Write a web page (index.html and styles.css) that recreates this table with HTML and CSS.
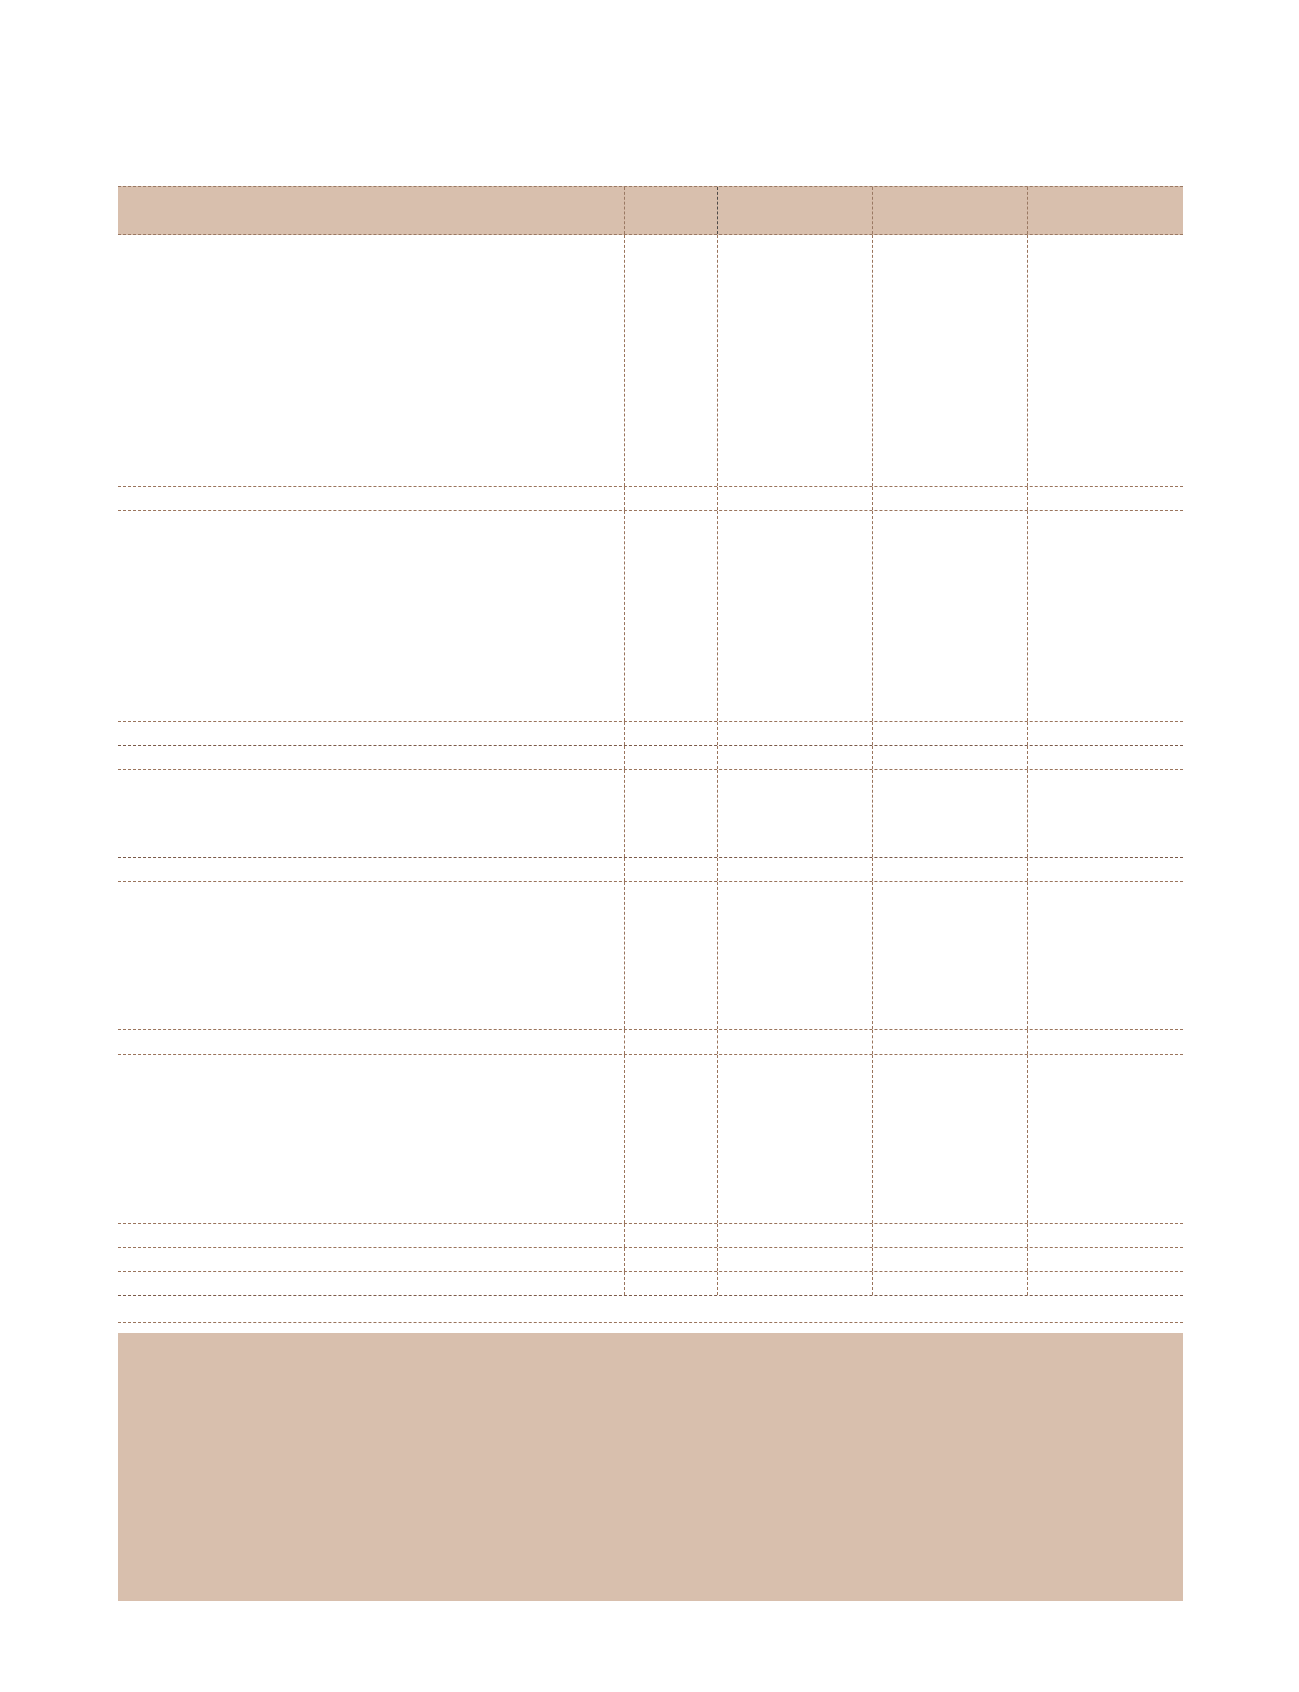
FILE: index.html
```html
<!DOCTYPE html>
<html lang="en">
<head>
<meta charset="utf-8">
<title>Table</title>
<link rel="stylesheet" href="styles.css">
</head>
<body>
<div class="page">
  <div class="table">
    <div class="row head">
      <div class="cell"></div><div class="cell dark-v"></div><div class="cell"></div><div class="cell"></div><div class="cell"></div>
    </div>
    <div class="row h252"><div class="cell"></div><div class="cell"></div><div class="cell"></div><div class="cell"></div><div class="cell"></div></div>
    <div class="row h24"><div class="cell"></div><div class="cell"></div><div class="cell"></div><div class="cell"></div><div class="cell"></div></div>
    <div class="row h211"><div class="cell"></div><div class="cell"></div><div class="cell"></div><div class="cell"></div><div class="cell"></div></div>
    <div class="row h24 darkline"><div class="cell"></div><div class="cell"></div><div class="cell"></div><div class="cell"></div><div class="cell"></div></div>
    <div class="row h24"><div class="cell"></div><div class="cell"></div><div class="cell"></div><div class="cell"></div><div class="cell"></div></div>
    <div class="row h88 darkline"><div class="cell"></div><div class="cell"></div><div class="cell"></div><div class="cell"></div><div class="cell"></div></div>
    <div class="row h24"><div class="cell"></div><div class="cell"></div><div class="cell"></div><div class="cell"></div><div class="cell"></div></div>
    <div class="row h148"><div class="cell"></div><div class="cell"></div><div class="cell"></div><div class="cell"></div><div class="cell"></div></div>
    <div class="row h25"><div class="cell"></div><div class="cell"></div><div class="cell"></div><div class="cell"></div><div class="cell"></div></div>
    <div class="row h169"><div class="cell"></div><div class="cell"></div><div class="cell"></div><div class="cell"></div><div class="cell"></div></div>
    <div class="row h24"><div class="cell"></div><div class="cell"></div><div class="cell"></div><div class="cell"></div><div class="cell"></div></div>
    <div class="row h24"><div class="cell"></div><div class="cell"></div><div class="cell"></div><div class="cell"></div><div class="cell"></div></div>
    <div class="row h24 darkline"><div class="cell"></div><div class="cell"></div><div class="cell"></div><div class="cell"></div><div class="cell"></div></div>
    <div class="row full h27"></div>
  </div>
  <div class="note"></div>
</div>
</body>
</html>
```
FILE: styles.css
```css
html, body {
  margin: 0;
  padding: 0;
  background: #ffffff;
  font-family: "Liberation Sans", Arial, sans-serif;
}

.page {
  padding: 186px 0 0 118px;
}

.table {
  width: 1065px;
}

.row {
  display: grid;
  grid-template-columns: 507px 93px 155px 155px 155px;
  box-sizing: border-box;
  border-bottom: 1px dashed #9a745c;
}

.row.full {
  display: block;
}

.row.darkline {
  border-bottom-color: #7a5948;
}

.cell {
  box-sizing: border-box;
  border-right: 1px dashed #9a745c;
}

.cell:last-child {
  border-right: none;
}

.head {
  height: 49px;
  background: #d8bfad;
  border-top: 1px dashed #9a7862;
  border-bottom-color: #9a7862;
}

.head .cell {
  border-right-color: #9a7862;
}

.head .cell.dark-v {
  border-right-color: #4f4a47;
}

.head .cell:last-child {
  border-right: none;
}

.h24 { height: 24px; }
.h25 { height: 25px; }
.h27 { height: 27px; }
.h88 { height: 88px; }
.h148 { height: 148px; }
.h169 { height: 169px; }
.h211 { height: 211px; }
.h252 { height: 252px; }

.note {
  margin-top: 10px;
  width: 1065px;
  height: 268px;
  background: #d8bfad;
}
```
